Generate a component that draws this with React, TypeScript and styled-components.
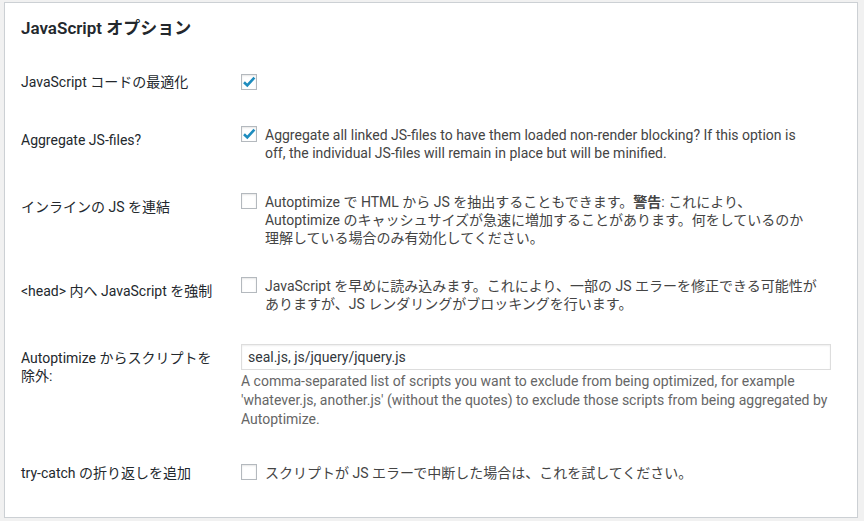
import React from 'react';
import styled, { createGlobalStyle } from 'styled-components';

const GlobalStyle = createGlobalStyle`
  html, body {
    margin: 0;
    padding: 0;
    background: #f1f1f1;
  }
  body {
    font-family: Roboto, "Noto Sans CJK JP", sans-serif;
    font-size: 14px;
    color: #444;
  }
`;

const Panel = styled.div`
  margin: 2px 6px 0 4px;
  padding: 0 16px 15px;
  background: #fff;
  border: 1px solid #ccd0d4;
  box-shadow: 0 1px 1px rgba(0, 0, 0, 0.04);
`;

const Title = styled.h2`
  margin: 14px 0 14px;
  font-size: 17px;
  line-height: 22px;
  font-weight: 600;
  color: #23282d;
`;

const FormTable = styled.table`
  width: 100%;
  border-collapse: collapse;
`;

const Label = styled.th`
  width: 200px;
  padding: 20px 10px 20px 0;
  text-align: left;
  vertical-align: top;
  font-weight: 400;
  line-height: 1.3;
  color: #23282d;
`;

const Field = styled.td`
  padding: 15px 10px;
  vertical-align: middle;
  line-height: 1.3;
`;

const CheckRow = styled.label`
  display: flex;
  align-items: flex-start;
  gap: 8px;
`;

const Box = styled.span`
  flex: none;
  width: 16px;
  height: 16px;
  box-sizing: border-box;
  border: 1px solid #b4b9be;
  background: #fff;
  box-shadow: inset 0 1px 2px rgba(0, 0, 0, 0.1);
  display: flex;
  align-items: center;
  justify-content: center;
`;

const TextInput = styled.input`
  display: block;
  width: 100%;
  box-sizing: border-box;
  height: 26px;
  padding: 3px 6px;
  border: 1px solid #ddd;
  box-shadow: inset 0 1px 2px rgba(0, 0, 0, 0.07);
  font: inherit;
  font-size: 14px;
  color: #32373c;
  outline: none;
`;

const Description = styled.p`
  margin: 2px 0 0;
  line-height: 19px;
  color: #666;
  white-space: nowrap;
`;

const Strong = styled.b`
  font-weight: 600;
`;

function Checkbox({ checked }: { checked?: boolean }) {
  return (
    <Box>
      {checked && (
        <svg width="14" height="14" viewBox="0 0 14 14">
          <path d="M2 7.2 L5.3 10.4 L12.4 2.6" fill="none" stroke="#1e8cbe" strokeWidth="2.6" />
        </svg>
      )}
    </Box>
  );
}

export default function App() {
  return (
    <>
      <GlobalStyle />
      <Panel>
        <Title>JavaScript オプション</Title>
        <FormTable>
          <tbody>
            <tr>
              <Label>JavaScript コードの最適化</Label>
              <Field>
                <CheckRow>
                  <Checkbox checked />
                </CheckRow>
              </Field>
            </tr>
            <tr>
              <Label>Aggregate JS-files?</Label>
              <Field>
                <CheckRow>
                  <Checkbox checked />
                  <span>
                    Aggregate all linked JS-files to have them loaded non-render blocking? If this option is
                    <br />
                    off, the individual JS-files will remain in place but will be minified.
                  </span>
                </CheckRow>
              </Field>
            </tr>
            <tr>
              <Label>インラインの JS を連結</Label>
              <Field>
                <CheckRow>
                  <Checkbox />
                  <span>
                    Autoptimize で HTML から JS を抽出することもできます。<Strong>警告</Strong>: これにより、
                    <br />
                    Autoptimize のキャッシュサイズが急速に増加することがあります。何をしているのか
                    <br />
                    理解している場合のみ有効化してください。
                  </span>
                </CheckRow>
              </Field>
            </tr>
            <tr>
              <Label>&lt;head&gt; 内へ JavaScript を強制</Label>
              <Field>
                <CheckRow>
                  <Checkbox />
                  <span>
                    JavaScript を早めに読み込みます。これにより、一部の JS エラーを修正できる可能性が
                    <br />
                    ありますが、JS レンダリングがブロッキングを行います。
                  </span>
                </CheckRow>
              </Field>
            </tr>
            <tr>
              <Label>
                Autoptimize からスクリプトを
                <br />
                除外:
              </Label>
              <Field>
                <TextInput defaultValue="seal.js, js/jquery/jquery.js" />
                <Description>
                  A comma-separated list of scripts you want to exclude from being optimized, for example
                  <br />
                  'whatever.js, another.js' (without the quotes) to exclude those scripts from being aggregated by
                  <br />
                  Autoptimize.
                </Description>
              </Field>
            </tr>
            <tr>
              <Label>try-catch の折り返しを追加</Label>
              <Field>
                <CheckRow>
                  <Checkbox />
                  <span>スクリプトが JS エラーで中断した場合は、これを試してください。</span>
                </CheckRow>
              </Field>
            </tr>
          </tbody>
        </FormTable>
      </Panel>
    </>
  );
}
